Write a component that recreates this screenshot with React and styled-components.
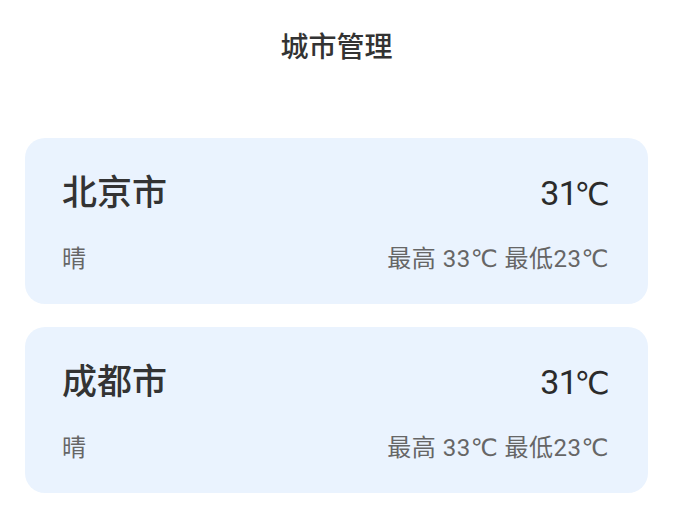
import React from "react";
import styled, { createGlobalStyle } from "styled-components";

const GlobalStyle = createGlobalStyle`
  body {
    margin: 0;
    background: #fff;
    font-family: Roboto, "Noto Sans CJK SC", sans-serif;
  }
`;

const cities = [
  { name: "北京市", temp: 31, weather: "晴", high: 33, low: 23 },
  { name: "成都市", temp: 31, weather: "晴", high: 33, low: 23 },
];

const App = () => {
  return (
    <Page>
      <GlobalStyle />
      <Title>城市管理</Title>
      <CardList>
        {cities.map((city) => (
          <CityCard key={city.name}>
            <Row>
              <CityName>{city.name}</CityName>
              <Temp>
                {city.temp}
                <Unit $tight>℃</Unit>
              </Temp>
            </Row>
            <Row>
              <SubText>{city.weather}</SubText>
              <SubText>
                最高 {city.high}
                <Unit>℃</Unit> 最低{city.low}
                <Unit>℃</Unit>
              </SubText>
            </Row>
          </CityCard>
        ))}
      </CardList>
    </Page>
  );
};

export default App;

const Page = styled.div`
  width: 100%;
  display: flex;
  flex-direction: column;
  padding: 25px 25px 0px 25px;
  box-sizing: border-box;
`;

const Title = styled.div`
  font-family: "Noto Sans CJK SC", sans-serif;
  text-align: center;
  font-size: 28px;
  line-height: 40px;
  font-weight: 500;
  color: #333;
`;

const CardList = styled.div`
  margin: 73px 0px 0px 0px;
  display: flex;
  flex-direction: column;
  gap: 23px;
`;

const CityCard = styled.div`
  height: 166px;
  box-sizing: border-box;
  padding: 35px 39px 31px 37px;
  border-radius: 20px;
  background-color: #eaf3fe;
  display: flex;
  flex-direction: column;
  gap: 30px;
`;

const Row = styled.div`
  display: flex;
  justify-content: space-between;
  align-items: center;
`;

const CityName = styled.div`
  font-family: Roboto, "Noto Sans CJK SC", sans-serif;
  font-size: 35px;
  line-height: 40px;
  font-weight: 500;
  color: #333;
`;

const Temp = styled.div`
  font-family: Roboto, "Noto Sans CJK SC", sans-serif;
  font-size: 34px;
  line-height: 40px;
  font-weight: 400;
  color: #2b2b2b;
  letter-spacing: -0.5px;
`;

const Unit = styled.span`
  font-family: "DejaVu Sans", sans-serif;
  font-weight: 400;
  font-size: ${(p) => (p.$tight ? "0.92em" : "1em")};
  margin-left: ${(p) => (p.$tight ? "-3px" : "0px")};
`;

const SubText = styled.div`
  font-family: Roboto, "Noto Sans CJK SC", sans-serif;
  font-size: 24px;
  line-height: 30px;
  color: #666;
  letter-spacing: 0.5px;
`;
